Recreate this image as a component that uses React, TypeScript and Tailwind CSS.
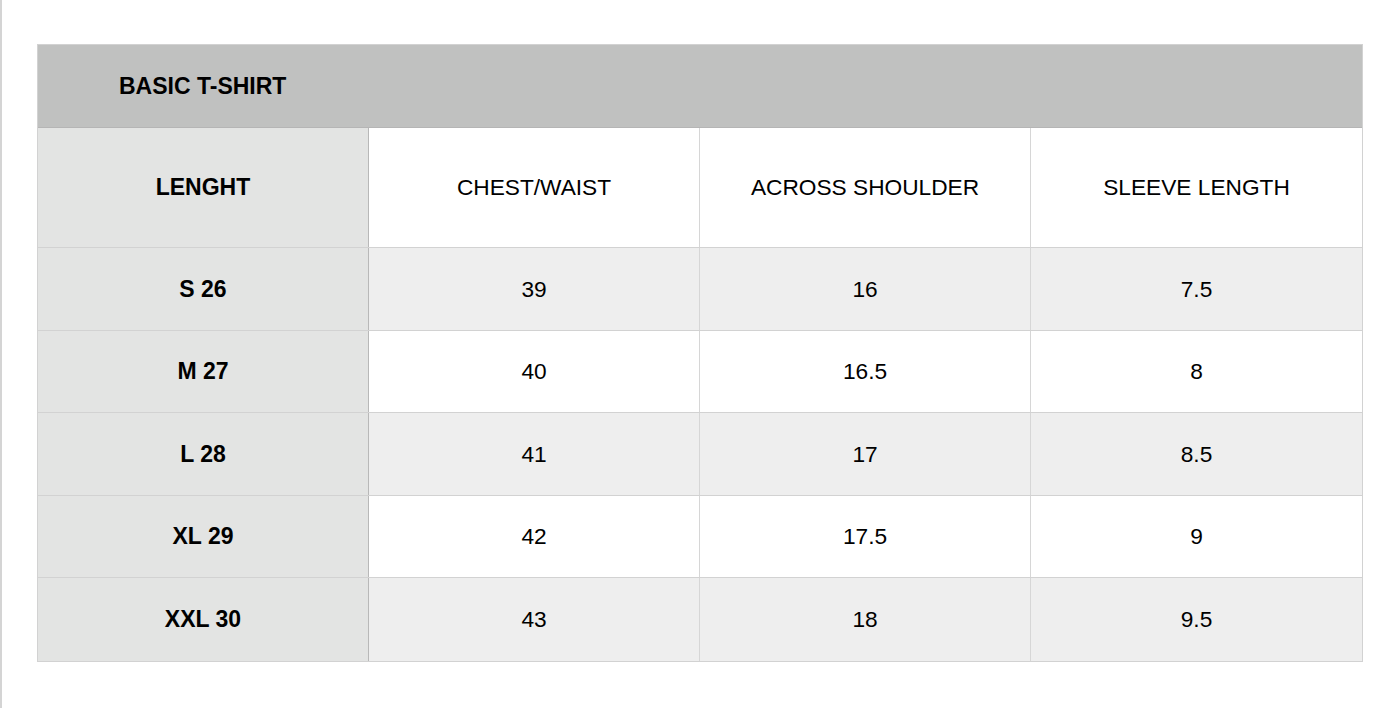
import React from "react";

const rows = [
  ["S 26", "39", "16", "7.5"],
  ["M 27", "40", "16.5", "8"],
  ["L 28", "41", "17", "8.5"],
  ["XL 29", "42", "17.5", "9"],
  ["XXL 30", "43", "18", "9.5"],
];

export default function App() {
  return (
    <div
      className="w-[1400px] h-[708px] bg-white border-l-2 border-[#d4d4d4] text-black"
      style={{ fontFamily: '"Liberation Sans", Arial, sans-serif' }}
    >
      <div className="pt-[44px] pl-[35px] w-[1361px]">
        <div className="border border-[#d2d2d2]">
          <div className="h-[83px] bg-[#c0c1c0] flex items-center pl-[81px] border-b border-[#b5b5b5]">
            <span className="text-[23px] font-bold">BASIC T-SHIRT</span>
          </div>
          <div className="grid grid-cols-4 h-[120px] border-b border-[#d2d2d2]">
            <div className="bg-[#e3e4e3] flex items-center justify-center border-r border-[#b8b8b8] text-[23px] font-bold">
              LENGHT
            </div>
            <div className="bg-white flex items-center justify-center border-r border-[#d6d6d6] text-[22.7px]">
              CHEST/WAIST
            </div>
            <div className="bg-white flex items-center justify-center border-r border-[#d6d6d6] text-[22.7px]">
              ACROSS SHOULDER
            </div>
            <div className="bg-white flex items-center justify-center text-[22.7px]">
              SLEEVE LENGTH
            </div>
          </div>
          {rows.map((r, i) => (
            <div
              key={i}
              className={
                "grid grid-cols-4 h-[82.5px] " +
                (i < rows.length - 1 ? "border-b border-[#d2d2d2] " : "") +
                (i % 2 === 0 ? "bg-[#eeeeee]" : "bg-white")
              }
            >
              <div className="bg-[#e3e4e3] flex items-center justify-center border-r border-[#b8b8b8] text-[23px] font-bold">
                {r[0]}
              </div>
              <div className="flex items-center justify-center border-r border-[#d6d6d6] text-[22.7px]">
                {r[1]}
              </div>
              <div className="flex items-center justify-center border-r border-[#d6d6d6] text-[22.7px]">
                {r[2]}
              </div>
              <div className="flex items-center justify-center text-[22.7px]">
                {r[3]}
              </div>
            </div>
          ))}
        </div>
      </div>
    </div>
  );
}
